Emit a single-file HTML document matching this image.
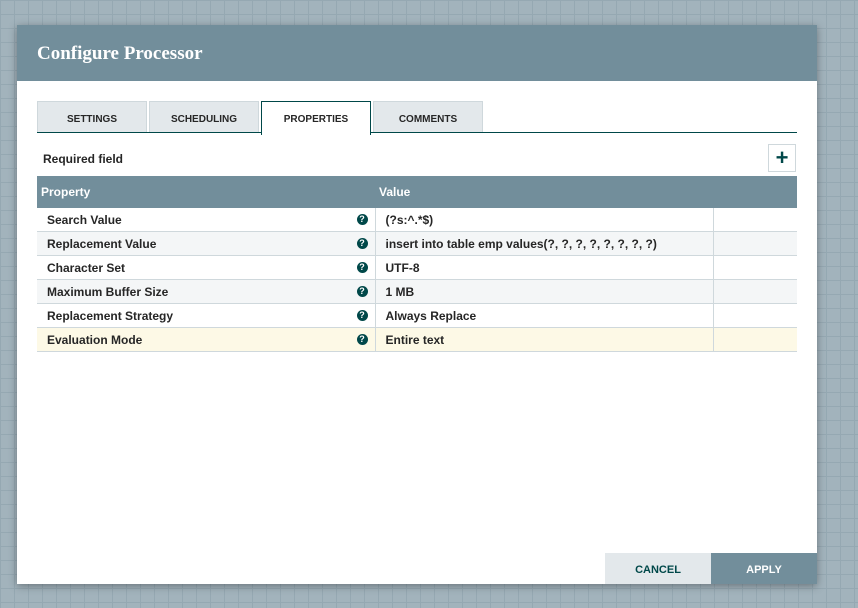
<!DOCTYPE html>
<html><head><style>
body{margin:0;width:858px;height:608px;overflow:hidden;background-color:#a2b3bc;
background-image:linear-gradient(#95a8b2 1px,transparent 1px),linear-gradient(90deg,#95a8b2 1px,transparent 1px);background-size:14px 14px;font-family:"Liberation Sans",sans-serif;position:relative}
.dlg{position:absolute;left:17px;top:25px;width:800px;height:559px;background:#fff;box-shadow:0 2px 8px rgba(0,0,0,.35)}
.hd{height:56px;background:#728e9b;color:#fff;font-family:"Liberation Serif",serif;font-weight:bold;font-size:19px;line-height:58px;padding-left:20px}
.tab{position:absolute;top:76px;width:108px;height:31px;background:#e3e8eb;border:1px solid #cfd8dc;border-bottom:none;font-size:10px;font-weight:bold;color:#262626;text-align:center;line-height:35px}
.tab.a{background:#fff;border:1px solid #004849;border-bottom:none;height:33px;z-index:2}
.line{position:absolute;left:20px;top:107px;width:760px;height:1px;background:#004849}
.req{position:absolute;left:26px;top:127px;font-size:12px;font-weight:bold;color:#262626}
.plus{position:absolute;left:751px;top:119px;width:26px;height:26px;border:1px solid #cfd8dc;background:#fff;color:#004849;font-size:22px;font-weight:bold;text-align:center;line-height:25px}
table{position:absolute;left:20px;top:151px;width:760px;border-collapse:collapse;font-size:12px}
th{background:#728e9b;color:#fff;text-align:left;height:32px;padding:0 4px;font-size:12px}
td{height:23px;border-bottom:1px solid #cfd8dc;font-weight:bold;color:#262626;padding:0}
tr.g td{background:#f4f6f7}tr.y td{background:#fdf9e6}
.p{padding-left:10px;position:relative}
.q{position:absolute;right:7px;top:6px;width:11px;height:11px;border-radius:50%;background:#004849;color:#fff;font-size:9px;line-height:11px;text-align:center}
.v{border-left:1px solid #cfd8dc;padding-left:10px}
.e{border-left:1px solid #cfd8dc}
.btn{position:absolute;top:528px;height:31px;width:106px;font-size:11px;font-weight:bold;text-align:center;line-height:35px}
</style></head><body>
<div class="dlg">
<div class="hd">Configure Processor</div>
<div class="tab" style="left:20px">SETTINGS</div>
<div class="tab" style="left:132px">SCHEDULING</div>
<div class="tab a" style="left:244px">PROPERTIES</div>
<div class="tab" style="left:356px">COMMENTS</div>
<div class="line"></div>
<div class="req">Required field</div>
<div class="plus">+</div>
<table>
<tr><th style="width:330px">Property</th><th colspan="2">Value</th></tr>
<tr><td class="p">Search Value<span class="q">?</span></td><td class="v" style="width:327px">(?s:^.*$)</td><td class="e"></td></tr>
<tr class="g"><td class="p">Replacement Value<span class="q">?</span></td><td class="v">insert into table emp values(?, ?, ?, ?, ?, ?, ?, ?)</td><td class="e"></td></tr>
<tr><td class="p">Character Set<span class="q">?</span></td><td class="v">UTF-8</td><td class="e"></td></tr>
<tr class="g"><td class="p">Maximum Buffer Size<span class="q">?</span></td><td class="v">1 MB</td><td class="e"></td></tr>
<tr><td class="p">Replacement Strategy<span class="q">?</span></td><td class="v">Always Replace</td><td class="e"></td></tr>
<tr class="y"><td class="p">Evaluation Mode<span class="q">?</span></td><td class="v">Entire text</td><td class="e"></td></tr>
</table>
<div class="btn" style="left:588px;background:#e3e8eb;color:#004849">CANCEL</div>
<div class="btn" style="left:694px;background:#728e9b;color:#fff">APPLY</div>
</div>
</body></html>
